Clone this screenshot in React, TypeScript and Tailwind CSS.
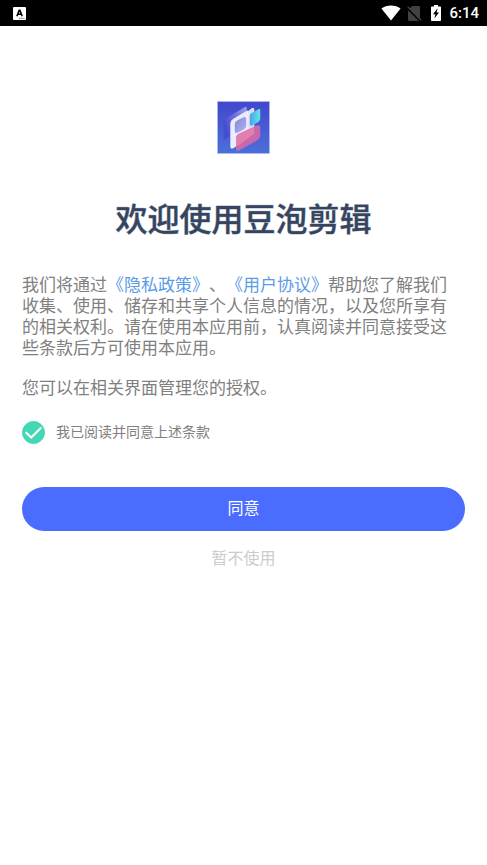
import { useState } from "react";

function StatusBar() {
  return (
    <div className="flex h-[26px] items-center justify-between bg-black pl-[13px] pr-2 text-white">
      <svg width="13" height="13" viewBox="0 0 13 13" aria-hidden="true">
        <rect width="13" height="13" rx="1" fill="#fff" />
        <path d="M3.9 9.2 6.2 3.4h.7l2.3 5.8M4.8 7.2h3.5" fill="none" stroke="#000" strokeWidth="1.6" />
        <path d="M6 11.3h5.5" stroke="#555" strokeWidth="0.9" strokeDasharray="1.2 0.4" />
      </svg>
      <div className="flex items-center">
        {/* Wifi */}
        <svg width="20" height="16" viewBox="0 0 20 16" aria-hidden="true">
          <path d="M10 15.6.4 3.6C3 1.6 6.3.5 10 .5s7 1.1 9.6 3.1z" fill="#fff" />
        </svg>
        {/* No SIM */}
        <svg className="ml-[6px]" width="15" height="17" viewBox="0 0 15 17" aria-hidden="true">
          <path d="M5.2 1h6.6c.7 0 1.2.5 1.2 1.2V16H2.2C1.5 16 1 15.5 1 14.8V5.2z" fill="#414141" />
          <path d="M0 2.4 14 16.2" stroke="#000" strokeWidth="2.6" />
          <path d="M.6 1.6 14.2 15.2" stroke="#4c4c4c" strokeWidth="1.3" />
        </svg>
        {/* Battery charging */}
        <svg className="ml-[9px]" width="10" height="16" viewBox="0 0 10 16" aria-hidden="true">
          <path d="M3 0h4v1.5h2c.6 0 1 .4 1 1V15c0 .6-.4 1-1 1H1c-.6 0-1-.4-1-1V2.5c0-.6.4-1 1-1h2z" fill="#fff" />
          <path d="M6.6 3.2 2 9.2h2.4L3.4 13.6 8 7.6H5.600z" fill="#000" />
        </svg>
        <span className="ml-2 font-[Roboto] text-[15px] font-medium leading-[26px]">6:14</span>
      </div>
    </div>
  );
}

function AppLogo() {
  return (
    <svg width="53" height="53" viewBox="0 0 53 53" role="img" aria-label="豆泡剪辑">
      <defs>
        <linearGradient id="logo-bg" x1="0" y1="0" x2="0" y2="1">
          <stop offset="0" stopColor="#4347cd" />
          <stop offset="1" stopColor="#4a70d8" />
        </linearGradient>
        <linearGradient id="logo-back" x1="1" y1="0" x2="0" y2="0.4">
          <stop offset="0" stopColor="#9a9fe9" />
          <stop offset="1" stopColor="#464dcf" />
        </linearGradient>
        <linearGradient id="logo-teal" x1="0" y1="0" x2="1" y2="0">
          <stop offset="0" stopColor="#4aa4e6" />
          <stop offset="1" stopColor="#62e6e4" />
        </linearGradient>
        <linearGradient id="logo-hole" x1="0" y1="0" x2="1" y2="1">
          <stop offset="0" stopColor="#7f86dc" />
          <stop offset="1" stopColor="#b3b6f0" />
        </linearGradient>
        <clipPath id="logo-stem">
          <path d="M0 0H37V33L15 49H0z" />
        </clipPath>
      </defs>
      <rect width="53" height="53" fill="#c3cdf3" />
      <rect x="0.8" y="0.8" width="51.4" height="51.4" fill="url(#logo-bg)" />
      <path d="M6.500 22Q6.500 19 9 17.300L27.500 6.300Q29.700 5 29.700 7.500V26L6.500 39z" fill="url(#logo-back)" />
      <path
        d="M13.300 23Q13.300 19.500 16 18L29.500 10Q31 9 31.500 10L35 7.300Q37.200 6 37.200 8.800V33L17 46.800Q13.300 49 13.300 45.500z"
        fill="#ebebfb"
      />
      <path d="M31.500 10V37L37.200 33V8.800Q37.200 6 35 7.300z" fill="#dcddf7" />
      <path
        d="M17.800 23.500Q17.800 20.800 20.200 19.600L26 16.600Q29.200 15 29.200 18.200V24.600Q29.200 27.300 26.800 28.600L21 31.600Q17.800 33 17.800 30z"
        fill="url(#logo-hole)"
      />
      <path d="M32.800 15.300Q32.800 13.200 34.500 12.100L41.300 8.300Q43.200 7.300 43.200 9.300V17.600Q43.200 19.800 41.300 21L35.300 24.400Q32.800 25.600 32.800 23z" fill="url(#logo-teal)" />
      <path
        d="M19 37.500Q19 34.200 22 32.700L39.700 24.600Q43.200 23.200 43.200 26.500V34.800Q43.200 37.600 40.800 39L22.500 49.300Q19 51 19 47.500z"
        fill="#c968ac"
      />
      <path
        d="M19 37.500Q19 34.200 22 32.700L39.700 24.600Q43.200 23.200 43.200 26.500V34.800Q43.200 37.600 40.800 39L22.500 49.300Q19 51 19 47.500z"
        fill="#e27fb0"
        clipPath="url(#logo-stem)"
      />
    </svg>
  );
}

export default function App() {
  const [agreed, setAgreed] = useState(true);

  return (
    <div
      lang="zh-CN"
      className="min-h-screen bg-white font-['Liberation_Sans','Noto_Sans_CJK_SC',sans-serif] text-[#808080]"
    >
      <StatusBar />

      <main className="flex flex-col px-[22px] pt-[75px]">
        <div className="flex justify-center">
          <AppLogo />
        </div>

        <h1 className="mt-[42px] text-center text-[32px] font-medium leading-[48px] text-[#35445f] [-webkit-text-stroke:1px_#35445f70]">
          欢迎使用豆泡剪辑
        </h1>

        {/* Terms */}
        <div className="mt-[31px] pr-[10px] text-[17px] leading-[21px] [text-spacing-trim:space-all]">
          <p>
            我们将通过
            <a href="#privacy" className="text-[#5a9be6]">《隐私政策》</a>、
            <a href="#agreement" className="text-[#5a9be6]">《用户协议》</a>
            帮助您了解我们收集、使用、储存和共享个人信息的情况，以及您所享有的相关权利。请在使用本应用前，认真阅读并同意接受这些条款后方可使用本应用。
          </p>
          <p className="mt-[19px]">您可以在相关界面管理您的授权。</p>
        </div>

        <label className="mt-[21px] flex items-center gap-[11px] text-sm leading-6">
          <span className="grid size-[23px]">
            <input
              type="checkbox"
              checked={agreed}
              onChange={(e) => setAgreed(e.target.checked)}
              className="col-start-1 row-start-1 size-[23px] appearance-none rounded-full border border-gray-300 checked:border-[#43d7b5] checked:bg-[#43d7b5]"
            />
            {agreed && (
              <svg className="pointer-events-none col-start-1 row-start-1" width="23" height="23" viewBox="0 0 23 23" aria-hidden="true">
                <path d="M4.2 11.7 9.200 16.600 18.800 7" fill="none" stroke="#fff" strokeWidth="2.100" strokeLinecap="round" strokeLinejoin="round" />
              </svg>
            )}
          </span>
          我已阅读并同意上述条款
        </label>

        <button type="button" className="mt-[43px] h-11 rounded-full bg-[#4a6cff] text-base text-white">
          同意
        </button>
        <button type="button" className="mt-4 self-center text-base leading-6 text-[#cccccc]">
          暂不使用
        </button>
      </main>
    </div>
  );
}
